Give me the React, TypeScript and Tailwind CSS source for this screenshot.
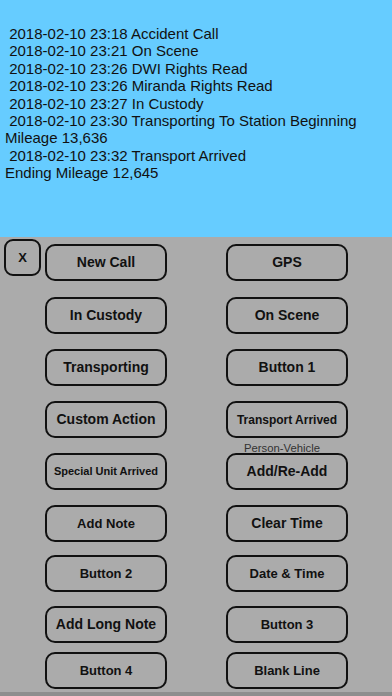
const LOG_LINES = [
  ' 2018-02-10 23:18 Accident Call',
  ' 2018-02-10 23:21 On Scene',
  ' 2018-02-10 23:26 DWI Rights Read',
  ' 2018-02-10 23:26 Miranda Rights Read',
  ' 2018-02-10 23:27 In Custody',
  ' 2018-02-10 23:30 Transporting To Station Beginning Mileage 13,636',
  ' 2018-02-10 23:32 Transport Arrived',
  'Ending Mileage 12,645',
]

type Btn = { label: string; size: string; note?: string }

const ROWS: { mt: string; left: Btn; right: Btn }[] = [
  { mt: 'mt-[7px]', left: { label: 'New Call', size: 'text-[14px]' }, right: { label: 'GPS', size: 'text-[14px]' } },
  { mt: 'mt-[16px]', left: { label: 'In Custody', size: 'text-[14px]' }, right: { label: 'On Scene', size: 'text-[14px]' } },
  { mt: 'mt-[15px]', left: { label: 'Transporting', size: 'text-[14px]' }, right: { label: 'Button 1', size: 'text-[14px]' } },
  { mt: 'mt-[15px]', left: { label: 'Custom Action', size: 'text-[14px]' }, right: { label: 'Transport Arrived', size: 'text-[12px]' } },
  { mt: 'mt-[15px]', left: { label: 'Special Unit Arrived', size: 'text-[11px]' }, right: { label: 'Add/Re-Add', size: 'text-[14px]', note: 'Person-Vehicle' } },
  { mt: 'mt-[15px]', left: { label: 'Add Note', size: 'text-[13px]' }, right: { label: 'Clear Time', size: 'text-[14px]' } },
  { mt: 'mt-[13px]', left: { label: 'Button 2', size: 'text-[13px]' }, right: { label: 'Date & Time', size: 'text-[13px]' } },
  { mt: 'mt-[14px]', left: { label: 'Add Long Note', size: 'text-[14px]' }, right: { label: 'Button 3', size: 'text-[13px]' } },
  { mt: 'mt-[9px]', left: { label: 'Button 4', size: 'text-[13px]' }, right: { label: 'Blank Line', size: 'text-[13px]' } },
]

function ActionButton({ btn }: { btn: Btn }) {
  return (
    <div className="relative">
      {btn.note && (
        <span className="absolute -top-[10px] left-0 right-[10px] text-center text-[11.3px] leading-none text-[#333]">
          {btn.note}
        </span>
      )}
      <button
        className={`w-[122px] h-[37px] rounded-[10px] border-2 border-[#111] bg-transparent font-bold text-[#111] whitespace-nowrap ${btn.size}`}
      >
        {btn.label}
      </button>
    </div>
  )
}

export default function App() {
  return (
    <div
      className="w-[392px] h-[696px] flex flex-col overflow-hidden bg-[#ababab]"
      style={{ fontFamily: '"Liberation Sans", Arial, sans-serif' }}
    >
      {/* Log */}
      <div className="h-[237px] flex-shrink-0 bg-[#66ccff] px-[5px] pt-[25px] text-[15px] leading-[17.4px] text-[#111]">
        {LOG_LINES.map((line, i) => (
          <div key={i} className="whitespace-pre-wrap">{line}</div>
        ))}
      </div>

      {/* Buttons */}
      <div className="flex-1 flex">
        <div className="ml-[4px] mt-[2px]">
          <button className="w-[37px] h-[37px] rounded-[9px] border-2 border-[#111] font-bold text-[13px] text-[#111]">
            X
          </button>
        </div>
        <div className="ml-[4px] flex flex-col">
          {ROWS.map((row, i) => (
            <div key={i} className={`flex gap-[59px] ${row.mt}`}>
              <ActionButton btn={row.left} />
              <ActionButton btn={row.right} />
            </div>
          ))}
        </div>
      </div>

      {/* Bottom strip */}
      <div className="h-[4px] flex-shrink-0 bg-[#8e8e8e]" />
    </div>
  )
}
